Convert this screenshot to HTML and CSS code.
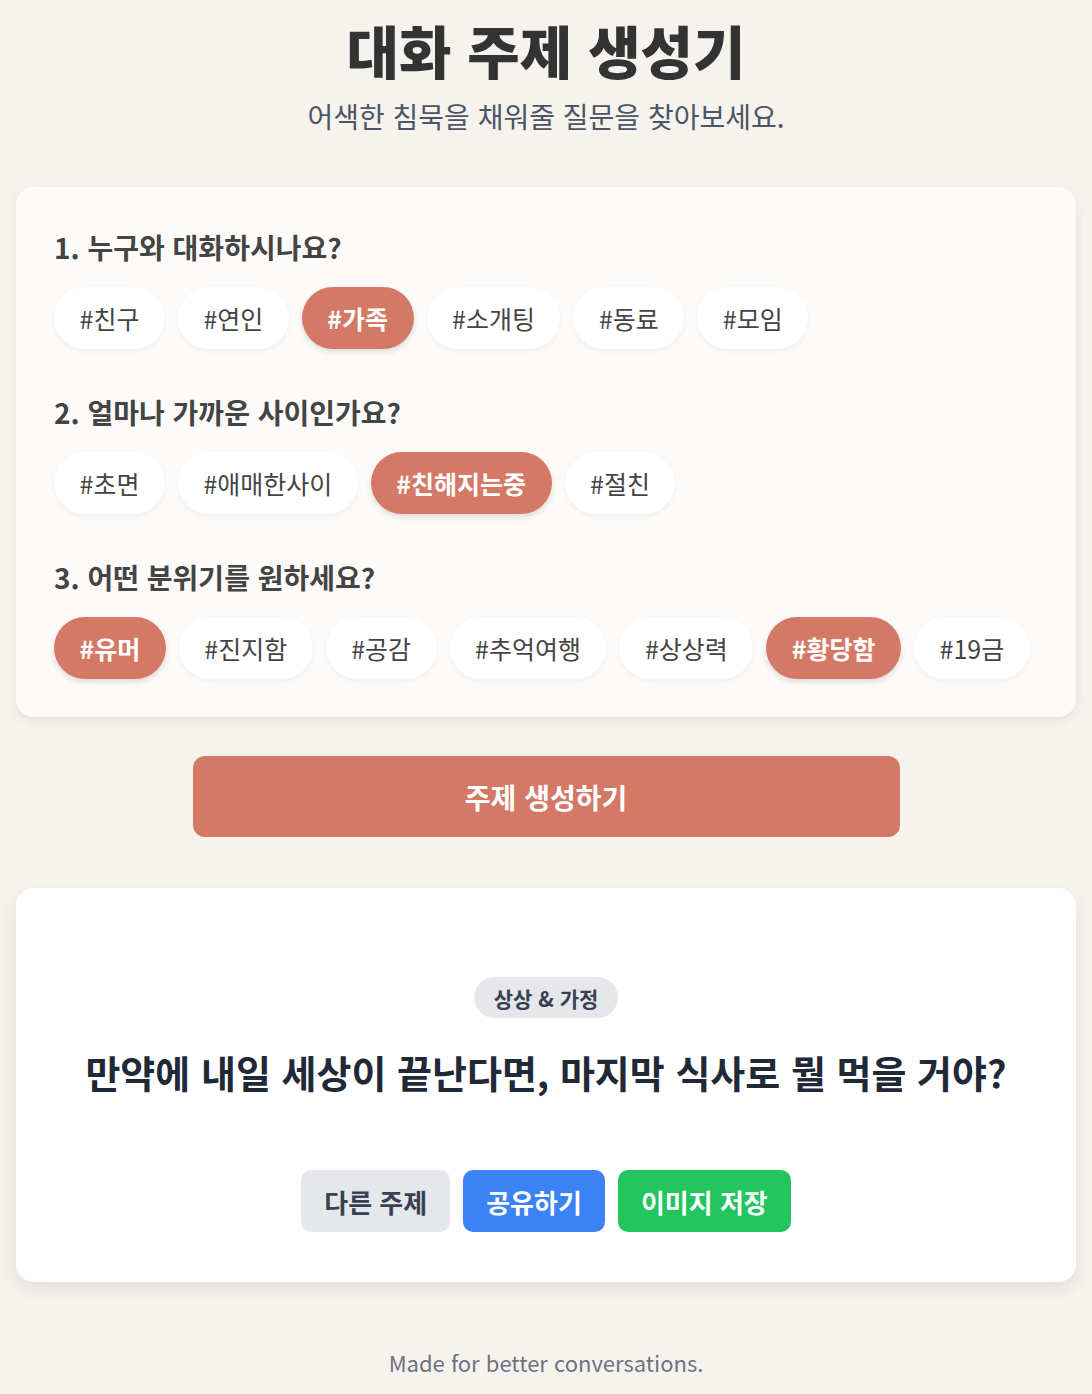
FILE: index.html
```html
<!DOCTYPE html>
<html lang="ko">
<head>
<meta charset="utf-8">
<title>대화 주제 생성기</title>
<link rel="stylesheet" href="styles.css">
</head>
<body>
<div class="page">
  <header class="header">
    <h1 class="title">대화 주제 생성기</h1>
    <p class="subtitle">어색한 침묵을 채워줄 질문을 찾아보세요.</p>
  </header>

  <section class="card options">
    <div class="group">
      <h2 class="q">1. 누구와 대화하시나요?</h2>
      <div class="chips">
        <span class="chip">#친구</span>
        <span class="chip">#연인</span>
        <span class="chip active">#가족</span>
        <span class="chip">#소개팅</span>
        <span class="chip">#동료</span>
        <span class="chip">#모임</span>
      </div>
    </div>
    <div class="group">
      <h2 class="q">2. 얼마나 가까운 사이인가요?</h2>
      <div class="chips">
        <span class="chip">#초면</span>
        <span class="chip">#애매한사이</span>
        <span class="chip active">#친해지는중</span>
        <span class="chip">#절친</span>
      </div>
    </div>
    <div class="group">
      <h2 class="q">3. 어떤 분위기를 원하세요?</h2>
      <div class="chips">
        <span class="chip active">#유머</span>
        <span class="chip">#진지함</span>
        <span class="chip">#공감</span>
        <span class="chip">#추억여행</span>
        <span class="chip">#상상력</span>
        <span class="chip active">#황당함</span>
        <span class="chip">#19금</span>
      </div>
    </div>
  </section>

  <button class="generate">주제 생성하기</button>

  <section class="card result">
    <span class="badge">상상 &amp; 가정</span>
    <p class="question">만약에 내일 세상이 끝난다면, 마지막 식사로 뭘 먹을 거야?</p>
    <div class="actions">
      <button class="act gray">다른 주제</button>
      <button class="act blue">공유하기</button>
      <button class="act green">이미지 저장</button>
    </div>
  </section>

  <footer class="footer">Made for better conversations.</footer>
</div>
</body>
</html>
```
FILE: styles.css
```css
* { box-sizing: border-box; }
html, body { margin: 0; padding: 0; }
body {
  background: #f6f3ef;
  font-family: "Noto Sans CJK KR", "Noto Sans", sans-serif;
  color: #333;
}
.page {
  padding: 16px 16px 0;
  display: flex;
  flex-direction: column;
  align-items: stretch;
}
.header { text-align: center; }
.title {
  margin: 0;
  font-size: 57px;
  font-weight: 900;
  line-height: 66px;
  color: #333;
}
.subtitle {
  margin: 15px 0 0;
  font-size: 28px;
  line-height: 38px;
  color: #4b5563;
}
.card {
  border-radius: 18px;
  box-shadow: 0 4px 10px rgba(0,0,0,0.07);
}
.options {
  margin-top: 52px;
  background: #fcfbf9;
  padding: 41px 38px 38px;
  display: flex;
  flex-direction: column;
  gap: 44px;
}
.q {
  margin: 0 0 20px;
  font-size: 28px;
  font-weight: 700;
  line-height: 39px;
  color: #444;
}
.chips {
  display: flex;
  flex-wrap: wrap;
  gap: 13px;
}
.chip {
  height: 62px;
  padding: 0 25.5px;
  display: inline-flex;
  align-items: center;
  border-radius: 31px;
  background: #fff;
  font-size: 25px;
  color: #444;
  box-shadow: 0 2px 5px rgba(0,0,0,0.05);
}
.chip.active {
  background: #d57967;
  color: #fff;
  font-weight: 700;
  box-shadow: 0 3px 6px rgba(0,0,0,0.12);
}
.generate {
  align-self: center;
  margin-top: 39px;
  width: 707px;
  height: 81px;
  border: none;
  border-radius: 12px;
  background: #d57967;
  color: #fff;
  font-family: inherit;
  font-size: 28px;
  font-weight: 700;
}
.result {
  margin-top: 51px;
  background: #fff;
  padding: 89px 24px 50px;
  display: flex;
  flex-direction: column;
  align-items: center;
  box-shadow: 0 8px 18px rgba(0,0,0,0.08);
}
.badge {
  height: 41px;
  padding: 0 20px;
  display: inline-flex;
  align-items: center;
  border-radius: 21px;
  background: #e5e7eb;
  color: #374151;
  font-size: 21px;
  font-weight: 700;
}
.question {
  margin: 27px 0 0;
  font-size: 38px;
  line-height: 53px;
  font-weight: 700;
  color: #1f2937;
  text-align: center;
}
.actions {
  margin-top: 72px;
  display: flex;
  gap: 13px;
}
.act {
  height: 62px;
  padding: 0 23px;
  border: none;
  border-radius: 10px;
  font-family: inherit;
  font-size: 26px;
  font-weight: 700;
}
.act.gray { background: #e5e7eb; color: #374151; }
.act.blue { background: #3b82f6; color: #fff; }
.act.green { background: #22c55e; color: #fff; }
.footer {
  margin-top: 65px;
  text-align: center;
  font-size: 22px;
  line-height: 30px;
  color: #6b7280;
}
```
